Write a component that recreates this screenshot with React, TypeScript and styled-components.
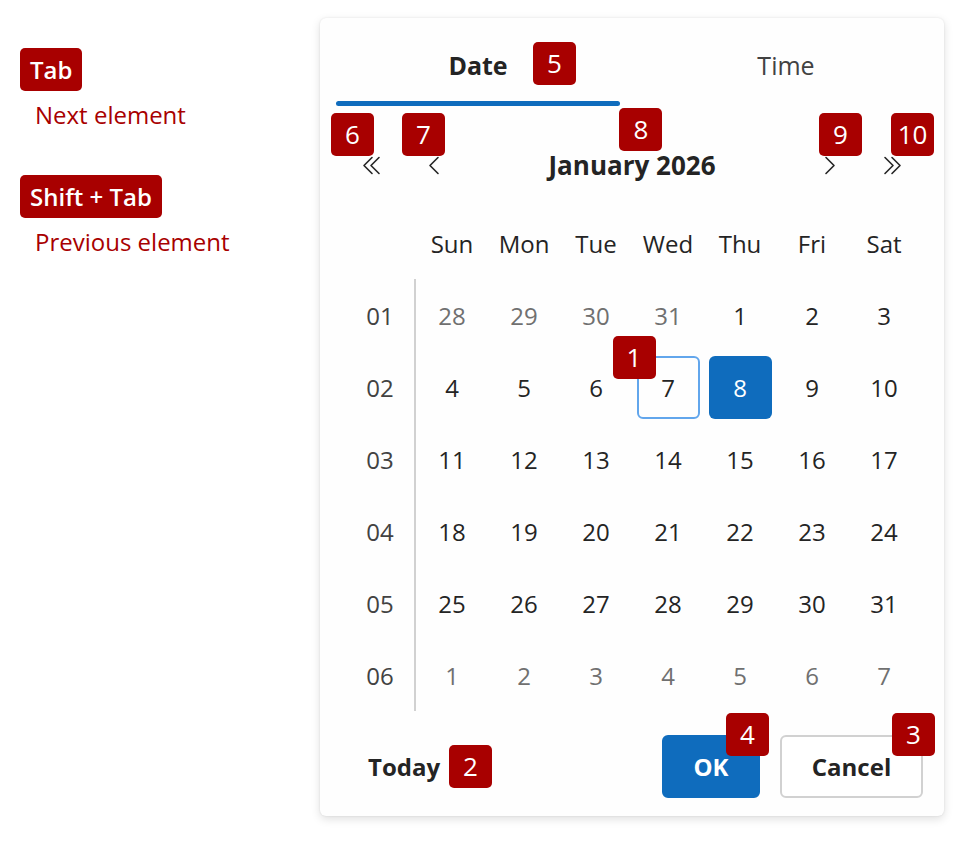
import { FC, ReactNode } from 'react';
import styled, { createGlobalStyle } from 'styled-components';

const GlobalStyle = createGlobalStyle`
    html, body {
        margin: 0;
        padding: 0;
        background: #ffffff;
    }
    body {
        font-family: 'Open Sans', 'Noto Sans', Arial, sans-serif;
        color: #242424;
    }
    button {
        font-family: inherit;
    }
`;

const Page = styled.div`
    display: flex;
    align-items: flex-start;
    padding: 18px 0 0 20px;
    width: 964px;
    height: 841px;
    box-sizing: border-box;
`;

const Legend = styled.div`
    width: 300px;
    margin-top: 30px;
    display: flex;
    flex-direction: column;
    gap: 44px;
`;

const LegendItem = styled.div`
    display: flex;
    flex-direction: column;
    align-items: flex-start;
`;

const KeyBadge = styled.span`
    display: inline-flex;
    align-items: center;
    height: 43px;
    padding: 0 10px;
    border-radius: 5px;
    background: #a80000;
    color: #ffffff;
    font-size: 24px;
    font-weight: 600;
`;

const KeyText = styled.span`
    margin: 8px 0 0 15px;
    color: #a80000;
    font-size: 24px;
    line-height: 32px;
`;

const Card = styled.div`
    width: 624px;
    height: 798px;
    box-sizing: border-box;
    padding: 0 0 18px;
    background: #fefefe;
    border-radius: 6px;
    box-shadow: 0 3px 10px rgba(0, 0, 0, 0.13), 0 0 2px rgba(0, 0, 0, 0.1);
    display: flex;
    flex-direction: column;
`;

const Tabs = styled.div`
    display: flex;
    gap: 24px;
    padding: 0 16px;
`;

const Tab = styled.div`
    position: relative;
    flex: 1;
    height: 88px;
    display: flex;
    flex-direction: column;
    align-items: center;
    padding-top: 12px;
    box-sizing: border-box;
`;

const TabLabel = styled.span<{ $active?: boolean }>`
    line-height: 71px;
    font-size: 25px;
    font-weight: ${p => (p.$active ? 700 : 400)};
    color: ${p => (p.$active ? '#242424' : '#424242')};
`;

const TabLine = styled.div`
    width: 100%;
    height: 5px;
    border-radius: 3px;
    background: #0f6cbd;
`;

const Badge = styled.span<{ $top: number; $left: number }>`
    position: absolute;
    top: ${p => p.$top}px;
    left: ${p => p.$left}px;
    width: 43px;
    height: 43px;
    border-radius: 5px;
    background: #a80000;
    color: #ffffff;
    font-size: 26px;
    font-weight: 400;
    line-height: 43px;
    text-align: center;
    z-index: 2;
`;

const NavRow = styled.div`
    display: flex;
    align-items: center;
    gap: 22px;
    height: 44px;
    margin-top: 37px;
    padding: 0 32px;
`;

const NavButton = styled.button`
    position: relative;
    width: 40px;
    height: 44px;
    padding: 0;
    border: none;
    background: none;
    display: flex;
    align-items: center;
    justify-content: center;
    color: #242424;
`;

const Title = styled.div`
    flex: 1;
    display: flex;
    justify-content: center;
`;

const TitleText = styled.span`
    position: relative;
    font-size: 26px;
    font-weight: 700;
    line-height: 36px;
    color: #242424;
`;

const Grid = styled.div`
    display: grid;
    grid-template-columns: repeat(8, 72px);
    grid-auto-rows: 72px;
    margin: 20px 24px 0;
`;

const HeadCell = styled.div`
    display: flex;
    align-items: center;
    justify-content: center;
    font-size: 24px;
    color: #242424;
`;

const WeekCell = styled.div`
    display: flex;
    align-items: center;
    justify-content: center;
    font-size: 24px;
    color: #424242;
    border-right: 2px solid #d1d1d1;
    box-sizing: border-box;
    padding-left: 2px;
`;

const DayCell = styled.div`
    display: flex;
    align-items: center;
    justify-content: center;
`;

const Day = styled.div<{ $muted?: boolean; $selected?: boolean; $focused?: boolean }>`
    position: relative;
    width: 63px;
    height: 63px;
    box-sizing: border-box;
    display: flex;
    align-items: center;
    justify-content: center;
    border-radius: 6px;
    font-size: 24px;
    color: ${p => (p.$selected ? '#ffffff' : p.$muted ? '#707070' : '#242424')};
    background: ${p => (p.$selected ? '#0f6cbd' : 'transparent')};
    border: 2px solid ${p => (p.$focused ? '#62a6ec' : 'transparent')};
`;

const Footer = styled.div`
    display: flex;
    align-items: center;
    gap: 20px;
    height: 63px;
    margin-top: 24px;
    padding: 0 21px 0 36px;
`;

const TodayButton = styled.button`
    position: relative;
    height: 63px;
    padding: 0 12px;
    margin-right: auto;
    border: none;
    background: none;
    font-size: 24px;
    font-weight: 700;
    color: #242424;
`;

const ActionButton = styled.button<{ $primary?: boolean; $width: number }>`
    position: relative;
    width: ${p => p.$width}px;
    height: 63px;
    border-radius: 6px;
    font-size: 24px;
    font-weight: 700;
    border: 2px solid ${p => (p.$primary ? '#0f6cbd' : '#d1d1d1')};
    background: ${p => (p.$primary ? '#0f6cbd' : '#ffffff')};
    color: ${p => (p.$primary ? '#ffffff' : '#242424')};
`;

const Chevron: FC<{ dir: 'left' | 'right'; double?: boolean }> = ({ dir, double }) => {
    const w = double ? 22 : 14;
    const one = 'M10 1 L2 9 L10 17';
    const flip = dir === 'right' ? `translate(${w} 0) scale(-1 1)` : undefined;
    return (
        <svg width={w} height={19} viewBox={`0 0 ${w} 19`} fill="none">
            <g transform={flip} stroke="#242424" strokeWidth="1.6" strokeLinecap="round" strokeLinejoin="round">
                <path d={one} transform="translate(1 0.5)" />
                {double && <path d={one} transform="translate(8 0.5)" />}
            </g>
        </svg>
    );
};

const weekdays = ['Sun', 'Mon', 'Tue', 'Wed', 'Thu', 'Fri', 'Sat'];

type DayInfo = { n: number; muted?: boolean };

const buildWeeks = (): DayInfo[][] => {
    const days: DayInfo[] = [
        ...[28, 29, 30, 31].map(n => ({ n, muted: true })),
        ...Array.from({ length: 31 }, (_, i) => ({ n: i + 1 })),
        ...[1, 2, 3, 4, 5, 6, 7].map(n => ({ n, muted: true })),
    ];
    const weeks: DayInfo[][] = [];
    for (let i = 0; i < 6; i++) weeks.push(days.slice(i * 7, i * 7 + 7));
    return weeks;
};

const LegendEntry: FC<{ keys: string; children: ReactNode }> = ({ keys, children }) => (
    <LegendItem>
        <KeyBadge>{keys}</KeyBadge>
        <KeyText>{children}</KeyText>
    </LegendItem>
);

export default function App() {
    const weeks = buildWeeks();
    return (
        <>
            <GlobalStyle />
            <Page>
                <Legend>
                    <LegendEntry keys="Tab">Next element</LegendEntry>
                    <LegendEntry keys="Shift + Tab">Previous element</LegendEntry>
                </Legend>
                <Card>
                    <Tabs>
                        <Tab>
                            <TabLabel $active>Date</TabLabel>
                            <TabLine />
                            <Badge $top={24} $left={197}>5</Badge>
                        </Tab>
                        <Tab>
                            <TabLabel>Time</TabLabel>
                        </Tab>
                    </Tabs>
                    <NavRow>
                        <NavButton aria-label="Previous year">
                            <Chevron dir="left" double />
                            <Badge $top={-30} $left={-21}>6</Badge>
                        </NavButton>
                        <NavButton aria-label="Previous month">
                            <Chevron dir="left" />
                            <Badge $top={-30} $left={-12}>7</Badge>
                        </NavButton>
                        <Title>
                            <TitleText>
                                January 2026
                                <Badge $top={-39} $left={71}>8</Badge>
                            </TitleText>
                        </Title>
                        <NavButton aria-label="Next month">
                            <Chevron dir="right" />
                            <Badge $top={-30} $left={9}>9</Badge>
                        </NavButton>
                        <NavButton aria-label="Next year">
                            <Chevron dir="right" double />
                            <Badge $top={-30} $left={19}>10</Badge>
                        </NavButton>
                    </NavRow>
                    <Grid>
                        <div />
                        {weekdays.map(d => (
                            <HeadCell key={d}>{d}</HeadCell>
                        ))}
                        {weeks.map((week, wi) => [
                            <WeekCell key={`w${wi}`}>0{wi + 1}</WeekCell>,
                            ...week.map((d, di) => {
                                const focused = wi === 1 && d.n === 7;
                                const selected = wi === 1 && d.n === 8;
                                return (
                                    <DayCell key={`${wi}-${di}`}>
                                        <Day $muted={d.muted} $selected={selected} $focused={focused}>
                                            {d.n}
                                            {focused && <Badge $top={-22} $left={-26}>1</Badge>}
                                        </Day>
                                    </DayCell>
                                );
                            }),
                        ])}
                    </Grid>
                    <Footer>
                        <TodayButton>
                            Today
                            <Badge $top={10} $left={93}>2</Badge>
                        </TodayButton>
                        <ActionButton $primary $width={98}>
                            OK
                            <Badge $top={-24} $left={62}>4</Badge>
                        </ActionButton>
                        <ActionButton $width={143}>
                            Cancel
                            <Badge $top={-24} $left={110}>3</Badge>
                        </ActionButton>
                    </Footer>
                </Card>
            </Page>
        </>
    );
}
